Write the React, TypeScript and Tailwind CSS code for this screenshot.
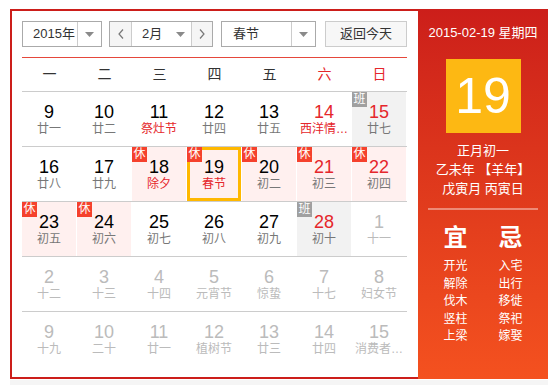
import React from "react";

type Cell = {
  d: number;
  l: string;
  other?: boolean;
  red?: boolean;
  fest?: boolean;
  tag?: "休" | "班";
  sel?: boolean;
};

const rows: Cell[][] = [
  [
    { d: 9, l: "廿一" },
    { d: 10, l: "廿二" },
    { d: 11, l: "祭灶节", fest: true },
    { d: 12, l: "廿四" },
    { d: 13, l: "廿五" },
    { d: 14, l: "西洋情…", fest: true, red: true },
    { d: 15, l: "廿七", red: true, tag: "班" },
  ],
  [
    { d: 16, l: "廿八" },
    { d: 17, l: "廿九" },
    { d: 18, l: "除夕", fest: true, tag: "休" },
    { d: 19, l: "春节", fest: true, tag: "休", sel: true },
    { d: 20, l: "初二", tag: "休" },
    { d: 21, l: "初三", red: true, tag: "休" },
    { d: 22, l: "初四", red: true, tag: "休" },
  ],
  [
    { d: 23, l: "初五", tag: "休" },
    { d: 24, l: "初六", tag: "休" },
    { d: 25, l: "初七" },
    { d: 26, l: "初八" },
    { d: 27, l: "初九" },
    { d: 28, l: "初十", red: true, tag: "班" },
    { d: 1, l: "十一", other: true },
  ],
  [
    { d: 2, l: "十二", other: true },
    { d: 3, l: "十三", other: true },
    { d: 4, l: "十四", other: true },
    { d: 5, l: "元宵节", other: true },
    { d: 6, l: "惊蛰", other: true },
    { d: 7, l: "十七", other: true },
    { d: 8, l: "妇女节", other: true },
  ],
  [
    { d: 9, l: "十九", other: true },
    { d: 10, l: "二十", other: true },
    { d: 11, l: "廿一", other: true },
    { d: 12, l: "植树节", other: true },
    { d: 13, l: "廿三", other: true },
    { d: 14, l: "廿四", other: true },
    { d: 15, l: "消费者…", other: true },
  ],
];

const weekdays = ["一", "二", "三", "四", "五", "六", "日"];

const Arrow = () => (
  <svg width="9" height="5" viewBox="0 0 9 5">
    <path d="M0 0H9L4.5 5Z" fill="#8a8a8a" />
  </svg>
);

function DayCell({ c }: { c: Cell }) {
  const bg = c.tag === "休" ? "bg-[#fff0ef]" : c.tag === "班" ? "bg-[#f2f2f2]" : "";
  const numColor = c.other ? "text-[#bbbbbb]" : c.red ? "text-[#e5262b]" : "text-black";
  const lunarColor = c.other ? "text-[#bbbbbb]" : c.fest ? "text-[#e5262b]" : "text-[#777777]";
  return (
    <div className="w-[55px] h-[54px]">
      <div className={`relative w-[54px] h-[54px] ${bg} flex flex-col items-center pt-[10px]`}>
        {c.sel && <div className="absolute inset-0 border-[3px] border-[#ffb800]" />}
        {c.tag && (
          <div
            className={`absolute left-0 top-0 z-10 w-[15px] h-[15px] flex items-center justify-center text-[12px] leading-[15px] text-white ${
              c.tag === "休" ? "bg-[#f5412d]" : "bg-[#a0a0a0]"
            }`}
          >
            {c.tag}
          </div>
        )}
        <div className={`text-[18px] leading-[20px] ${numColor}`} style={{ fontFamily: '"Liberation Sans", Arial, sans-serif' }}>
          {c.d}
        </div>
        <div className={`text-[12px] leading-[14px] whitespace-nowrap ${lunarColor}`}>{c.l}</div>
      </div>
    </div>
  );
}

export default function App() {
  return (
    <div
      className="w-[558px] h-[385px] bg-white relative"
      style={{ fontFamily: '"Liberation Sans", "Noto Sans CJK SC", sans-serif' }}
    >
      <div className="flex pt-[9px] pl-[10px]">
        {/* left area */}
        <div className="w-[408px] h-[370px] border-2 border-r-0 border-[#cc1e1a] bg-white pl-[10px] pt-[10px]">
          {/* toolbar */}
          <div className="flex items-center h-[26px] text-[13px] text-[#333]">
            <div className="w-[80px] h-[26px] border border-[#aaaaaa] flex">
              <div className="flex-1 flex items-center pl-[10px]">2015年</div>
              <div className="w-[24px] border-l border-[#cccccc] flex items-center justify-center">
                <Arrow />
              </div>
            </div>
            <div className="ml-[7px] w-[104px] h-[26px] border border-[#aaaaaa] flex">
              <div className="w-[22px] bg-[#f5f5f5] flex items-center justify-center border-r border-[#cccccc]">
                <svg width="6" height="10" viewBox="0 0 6 10">
                  <path d="M5 0.5L1 5L5 9.5" fill="none" stroke="#777" strokeWidth="1.2" />
                </svg>
              </div>
              <div className="w-[59px] flex items-center pl-[10px] pr-[6px] justify-between">
                <span>2月</span>
                <Arrow />
              </div>
              <div className="flex-1 bg-[#f5f5f5] flex items-center justify-center border-l border-[#cccccc]">
                <svg width="6" height="10" viewBox="0 0 6 10">
                  <path d="M1 0.5L5 5L1 9.5" fill="none" stroke="#777" strokeWidth="1.2" />
                </svg>
              </div>
            </div>
            <div className="ml-[8px] w-[95px] h-[26px] border border-[#aaaaaa] flex">
              <div className="flex-1 flex items-center pl-[11px]">春节</div>
              <div className="w-[24px] border-l border-[#cccccc] flex items-center justify-center">
                <Arrow />
              </div>
            </div>
            <div className="ml-[9px] w-[82px] h-[26px] border border-[#cccccc] bg-[#f7f7f7] flex items-center justify-center">
              返回今天
            </div>
          </div>

          {/* header */}
          <div className="mt-[10px] w-[385px] border-t border-b border-t-[#e5483b] border-b-[#cccccc] grid grid-cols-7 h-[35px]">
            {weekdays.map((w, i) => (
              <div
                key={w}
                className={`flex items-center justify-center text-[14px] ${i >= 5 ? "text-[#e5262b]" : "text-[#333]"}`}
              >
                {w}
              </div>
            ))}
          </div>

          {/* rows */}
          <div className="w-[385px]">
            {rows.map((r, ri) => (
              <div
                key={ri}
                className={`grid grid-cols-7 ${ri < rows.length - 1 ? "border-b border-[#cccccc]" : ""}`}
              >
                {r.map((c, ci) => (
                  <DayCell key={ci} c={c} />
                ))}
              </div>
            ))}
          </div>
        </div>

        {/* right panel */}
        <div className="w-[130px] h-[370px] bg-gradient-to-b from-[#cc1e1a] to-[#f4511f] text-white flex flex-col items-center">
          <div className="mt-[16px] text-[13px] leading-[16px] whitespace-nowrap">2015-02-19 星期四</div>
          <div className="mt-[18px] w-[75px] h-[74px] bg-[#fdb813] flex items-center justify-center">
            <span className="text-[50px] leading-none" style={{ fontFamily: '"Liberation Sans", Arial, sans-serif' }}>
              19
            </span>
          </div>
          <div className="mt-[8px] text-[13px] leading-[19px] text-center whitespace-nowrap">
            <div>正月初一</div>
            <div>乙未年 【羊年】</div>
            <div>戊寅月 丙寅日</div>
          </div>
          <div className="mt-[10px] w-[110px] h-[2px] bg-white/40" />
          <div className="mt-[14px] flex gap-[31px]">
            <div className="flex flex-col items-center w-[24px]">
              <div className="text-[24px] leading-[28px] font-bold">宜</div>
              <div className="mt-[6px] text-[12px] leading-[17.5px] flex flex-col items-center">
                <span>开光</span>
                <span>解除</span>
                <span>伐木</span>
                <span>竖柱</span>
                <span>上梁</span>
              </div>
            </div>
            <div className="flex flex-col items-center w-[24px]">
              <div className="text-[24px] leading-[28px] font-bold">忌</div>
              <div className="mt-[6px] text-[12px] leading-[17.5px] flex flex-col items-center">
                <span>入宅</span>
                <span>出行</span>
                <span>移徙</span>
                <span>祭祀</span>
                <span>嫁娶</span>
              </div>
            </div>
          </div>
        </div>
      </div>
      <div className="ml-[10px] w-[538px] h-[5px] mt-[1px] bg-[#f5f5f5]" />
    </div>
  );
}
